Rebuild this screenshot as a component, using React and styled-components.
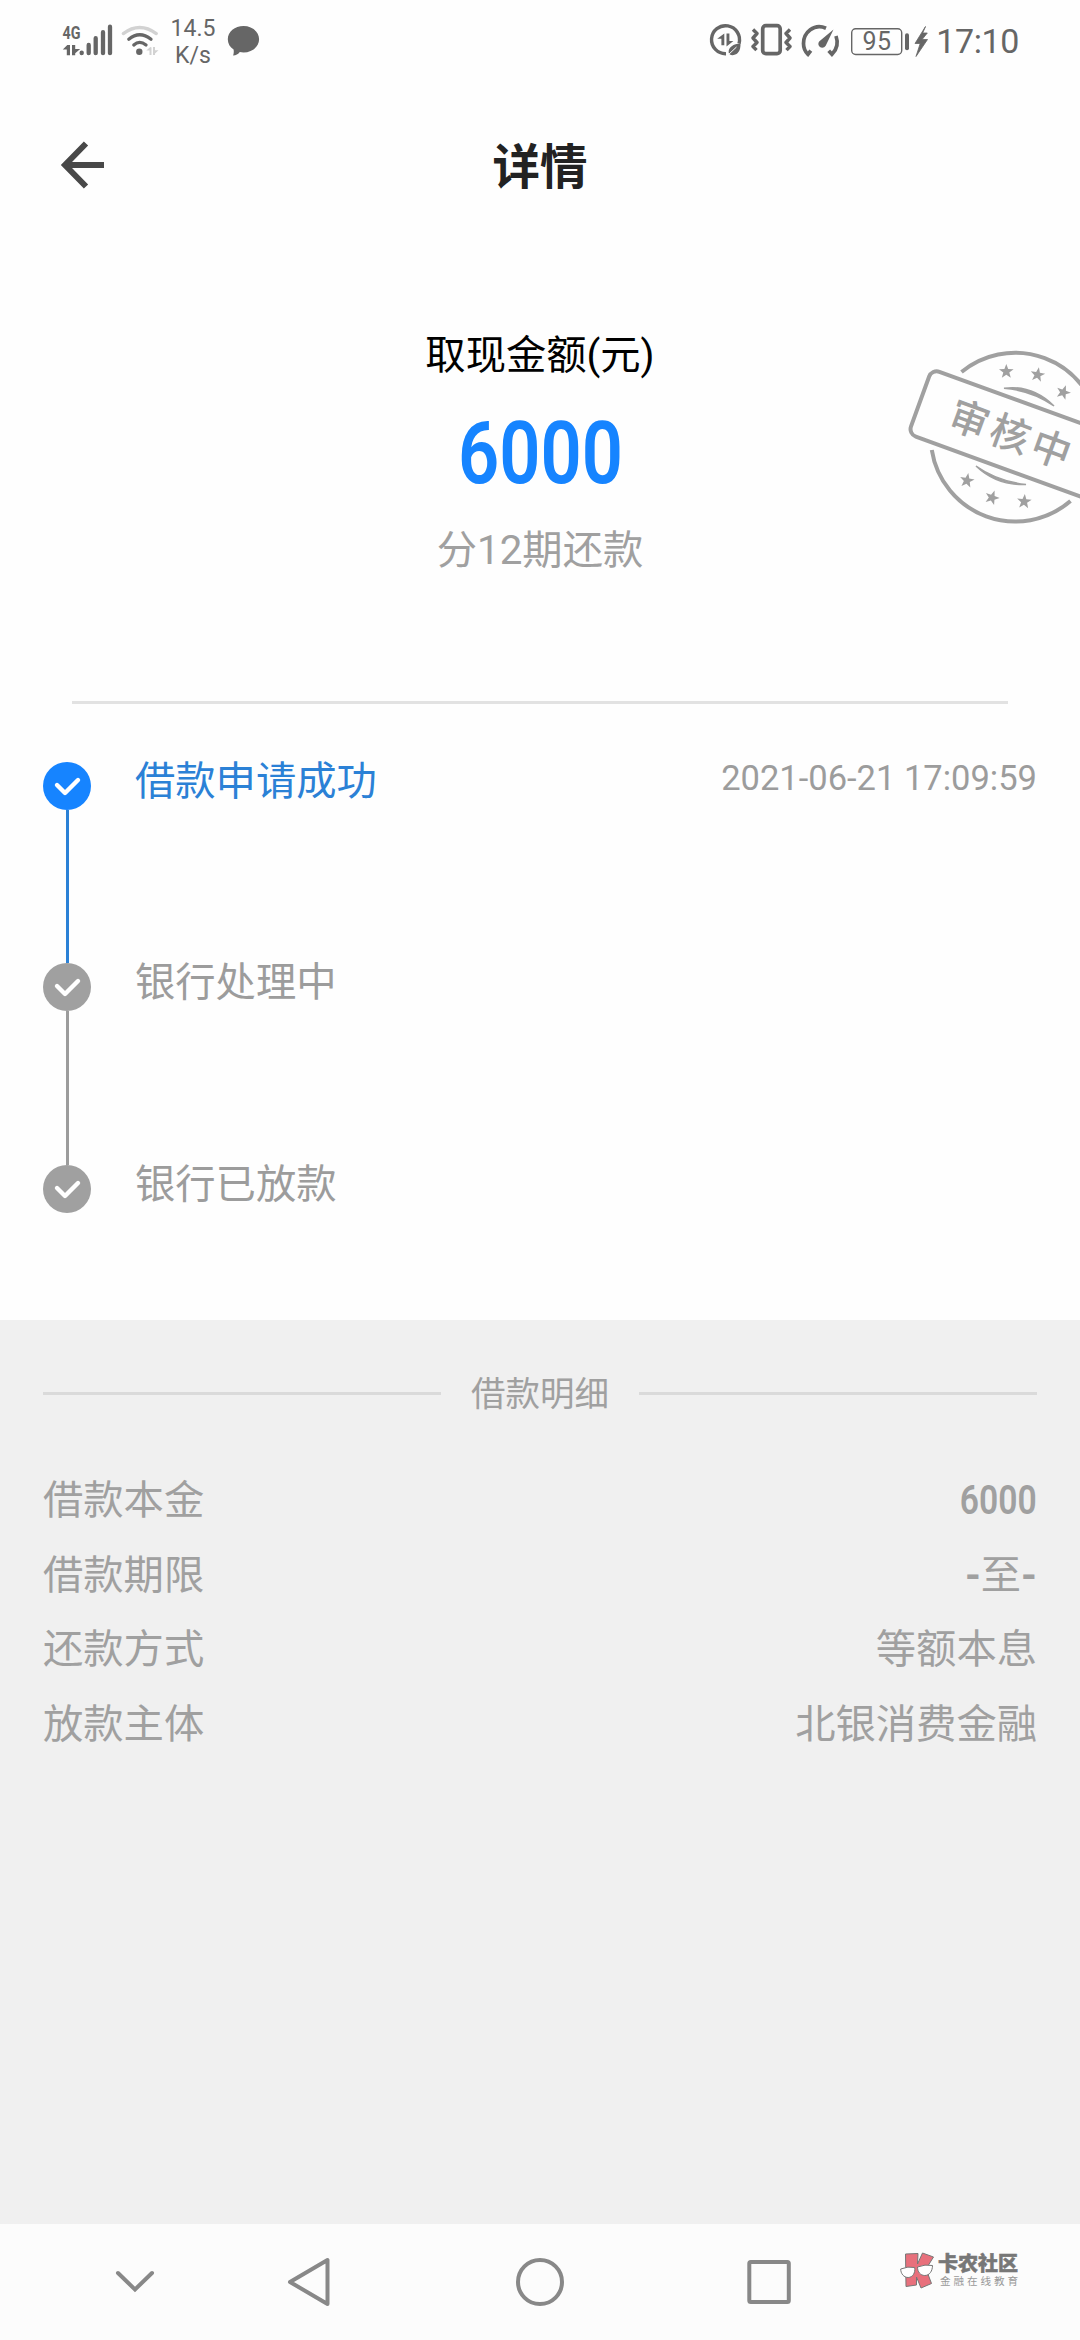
import React from 'react';
import styled, { createGlobalStyle } from 'styled-components';

const GlobalStyle = createGlobalStyle`
	* {
		box-sizing: border-box;
	}

	body {
		margin: 0;
		background: #fefefe;
		font-family: Roboto, 'Noto Sans CJK SC', sans-serif;
	}
`;

const Page = styled.div`
	display: flex;
	flex-direction: column;
	width: 1080px;
	height: 2340px;
	overflow: hidden;
	background: #fefefe;
`;

const StatusBar = styled.div`
	display: flex;
	justify-content: space-between;
	height: 80px;
	padding: 0 61px 0 60px;
	color: #666;
`;

const StatusGroup = styled.div`
	display: flex;
	align-items: flex-start;
`;

const NetSpeed = styled.div`
	width: 50px;
	margin-right: 9px;
	padding-top: 16px;
	font-size: 23px;
	line-height: 26.5px;
	text-align: center;
`;

const Clock = styled.div`
	padding-top: 21px;
	font-size: 34px;
	line-height: 40px;
	letter-spacing: -0.4px;
`;

const Header = styled.header`
	display: grid;
	grid-template-columns: 160px 1fr 160px;
	align-items: center;
	height: 170px;
`;

const BackButton = styled.button`
	display: flex;
	padding: 0 0 0 56px;
	border: 0;
	background: none;
`;

const Title = styled.h1`
	margin: 0;
	padding-top: 6px;
	color: #222;
	font-size: 47.5px;
	line-height: 60px;
	font-weight: 700;
	text-align: center;
`;

const Summary = styled.section`
	position: relative;
	display: flex;
	flex-direction: column;
	align-items: center;
	height: 451px;
	padding-top: 76px;
`;

const AmountLabel = styled.div`
	color: #000;
	font-size: 40.3px;
	line-height: 60px;
`;

const Amount = styled.div`
	margin-top: 15px;
	color: #1684ff;
	font-size: 87px;
	font-weight: 600;
	line-height: 104px;
	transform: scaleX(0.83);
`;

const Periods = styled.div`
	margin-top: 16px;
	color: #a0a0a0;
	font-size: 40.3px;
	line-height: 60px;
`;

const Stamp = styled.svg`
	position: absolute;
	top: 90px;
	right: 0;
`;

const Rule = styled.hr`
	width: 936px;
	height: 3px;
	margin: 0 auto;
	border: 0;
	background: #e2e2e2;
`;

const Timeline = styled.ul`
	height: 616px;
	margin: 0;
	padding: 58px 43px 0;
	list-style: none;
`;

const Step = styled.li`
	display: flex;
	height: 201.3px;
	color: ${(props) => (props.$active ? '#2b81d6' : '#9c9c9c')};
`;

const Rail = styled.div`
	display: flex;
	flex-direction: column;
	align-items: center;
	width: 48px;
	margin-right: 44px;

	svg {
		flex: none;
	}
`;

const RailLine = styled.div`
	width: 3px;
	flex: 1;
	background: currentColor;
`;

const StepName = styled.div`
	flex: 1;
	margin-top: -10px;
	font-size: 40.3px;
	line-height: 60px;
`;

const StepTime = styled.div`
	margin-top: -4px;
	color: #9c9c9c;
	font-size: 34.5px;
	line-height: 40px;
`;

const Details = styled.section`
	flex: 1;
	padding: 48px 43px 0;
	background: #f0f0f0;
	color: #a0a0a0;
`;

const DetailsTitle = styled.div`
	display: flex;
	align-items: center;
	gap: 30px;
	height: 50px;
	font-size: 34.5px;
	line-height: 50px;

	&::before,
	&::after {
		content: '';
		flex: 1;
		height: 3px;
		background: #dadada;
	}
`;

const DetailsName = styled.span`
	padding-top: 2px;
`;

const DetailList = styled.div`
	padding-top: 46px;
`;

const DetailRow = styled.div`
	display: flex;
	justify-content: space-between;
	height: 74.5px;
	font-size: 40.3px;
	line-height: 74.5px;
`;

const Din = styled.span`
	display: inline-block;
	font-size: 41px;
	font-weight: 600;
	line-height: 73px;
	transform: scaleX(0.82);
	transform-origin: right center;
`;

const NavBar = styled.nav`
	display: flex;
	align-items: flex-start;
	height: 116px;
	padding: 28px 0 0 105px;
	background: #fcfcfc;
`;

const NavButton = styled.button`
	width: 60px;
	height: 60px;
	margin-right: ${(props) => props.$gap}px;
	padding: 0;
	border: 0;
	background: none;

	svg {
		display: block;
	}
`;

const Brand = styled.div`
	display: flex;
	gap: 4px;
`;

const BrandName = styled.div`
	padding-top: 1px;
	color: #777;
	font-size: 20px;
	font-weight: 900;
	line-height: 22px;
	-webkit-text-stroke: 0.5px #777;
`;

const BrandTagline = styled.div`
	padding-left: 2px;
	color: #999;
	font-size: 10.6px;
	line-height: 13px;
	letter-spacing: 2.9px;
	white-space: nowrap;
`;

// network, signal bars and wifi
const SignalIcons = () => (
    <svg width="108" height="80" viewBox="60 0 108 80" fill="#666">
        <text x="62.5" y="38.500" fontSize="17.5" fontWeight="700" textLength="18" lengthAdjust="spacingAndGlyphs">4G</text>
        <path d="M70 45v10.3h-3.2v-5.8H62.800l4.500-4.500zM72 45v10.3h3.200v-2l5-4.300h-5v-4z" />
        <g stroke="#666" strokeWidth="4.300" strokeLinecap="round">
            <path d="M81.700 52.600v.6M88.700 45v8.200M95.700 38.200v15M103 32.200v21M110 26.700v26.500" />
        </g>
        <circle cx="139.300" cy="51.700" r="3.200" />
        <g fill="none" strokeWidth="3.300" strokeLinecap="round">
            <path d="M123.300 33.600Q139.600 21.400 156.300 33.600" stroke="#d2d2d2" />
            <path d="M128.800 39.200Q139.600 30.200 151 39.200" stroke="#666" />
            <path d="M133.800 45Q139.500 39.800 146 45" stroke="#666" />
        </g>
        <path d="M151.500 47.500v7.500h-2v-4.500h-3.200l4-3.500zM153 47v8h2v-1.500l3.500-3.200H155v-3.300z" fill="#d2d2d2" />
    </svg>
);

const ChatIcon = () => (
    <svg width="34" height="80" viewBox="227 0 34 80" fill="#666">
        <path d="M243.500 26c8.700 0 15.600 5.900 15.600 13.200s-6.900 13.200-15.600 13.200c-1.300 0-2.500-.1-3.700-.4-1.600 2.200-4.100 3.700-6.700 3.600.6-1.400.9-3.600.5-6-3.600-2.400-5.800-6.100-5.800-10.400 0-7.300 7-13.200 15.700-13.200z" />
    </svg>
);

const SystemIcons = () => (
    <svg width="230" height="80" viewBox="705 0 230 80" fill="none" stroke="#666">
        <path d="M738 43.500A14 14 0 1 0 725 53.700" strokeWidth="3.400" />
        <path d="M723.300 33.500v11.800h-2.900v-6.600h-4.200zM725.500 33.500h2.900v7.600h4l-6.900 5.500z" fill="#666" stroke="none" />
        <path d="M739.500 43.200c-7 .8-12.500 3.800-11.800 9.600.8 3.400 6.300 2.800 9 .2 2.400-2.400 2.900-6 2.800-9.800z" fill="#666" stroke="none" />
        <path d="M726.500 55.500l9-8.500" stroke="#fefefe" strokeWidth="1" />

        <rect x="761.700" y="25.700" width="17.500" height="28" rx="3.200" strokeWidth="3.700" />
        <path d="M752 29.500l4 4-4 4.500 4 4.500-4 4 3.500 3.700M789 29.500l-4 4 4 4.500-4 4.500 4 4-3.500 3.700" strokeWidth="3.400" strokeLinejoin="round" />

        <g strokeWidth="3.700">
            <path d="M825 28.200C813 23 802.500 32.500 802.500 43.500c0 4 1.500 8 4.500 10.800l2.800-3.600M835 36c2.300 6.500.8 13.500-4 18.300l-3.300-3.600" />
        </g>
        <path d="M832.500 29.500l-7.800 16.300c-1.800 3-6.300 2.300-7.200-.7-.5-1.800.3-3.300 1.500-4.300z" fill="#666" stroke="none" />

        <rect x="850.700" y="28.700" width="50" height="25.800" rx="4" strokeWidth="1.400" />
        <path d="M906 35.300v12.900" strokeWidth="4" strokeLinecap="round" />
        <text x="861.500" y="50" fill="#666" stroke="none" fontSize="25" letterSpacing="0.5">95</text>
        <path d="M924.500 26.500l-10.500 17h5.200l-4.200 13 11.500-17h-5.400l5.200-6.500h-4.600z" fill="#666" stroke="#666" strokeWidth="0.800" />
    </svg>
);

const STARS = [
    [1006.300, 371.500, 0],
    [1037.600, 374.700, 10],
    [1063.300, 392.300, 20],
    [967, 480.500, 10],
    [992, 497.600, 20],
    [1024.200, 501.500, 5]
];

const PendingStamp = () => (
    <Stamp width="180" height="200" viewBox="900 340 180 200" fill="none" stroke="#a0a0a0" strokeWidth="4">
        <path d="M961.500 372A84.500 84.500 0 0 1 1098.500 423M931.800 450A84.500 84.500 0 0 0 1070.500 501" />
        <rect x="914" y="401.500" width="202" height="69" rx="8" transform="rotate(20 1015 436)" />
        <path d="M1004 388.300Q1032 384.500 1054 406Q1032 390.500 1004 388.300zM976 466Q997 486 1026 484.500Q997 481 976 466z" strokeWidth="1.500" fill="#a0a0a0" />
        {STARS.map(([x, y, angle]) => (
            <path
                key={x}
                d="M0-7.600L1.900-2.400 7.300-2.300 3 1.100 4.500 6.300 0 3.200-4.500 6.300-3 1.100-7.300-2.300-1.900-2.400z"
                transform={`translate(${x} ${y}) rotate(${angle})`}
                fill="#a0a0a0"
                stroke="none"
            />
        ))}
        <text
            transform="translate(1010.500 433.500) rotate(20)"
            x="2"
            y="15"
            fill="#a0a0a0"
            stroke="none"
            fontSize="39.5"
            fontWeight="500"
            letterSpacing="4"
            textAnchor="middle"
        >
            审核中
        </text>
    </Stamp>
);

const StepMark = ({ active }) => (
    <svg width="48" height="48" viewBox="0 0 48 48">
        <circle cx="24" cy="24" r="24" fill={active ? '#1684ff' : '#a0a0a0'} />
        <path d="M14 23l8 8L35 18" fill="none" stroke="#fff" strokeWidth="4.400" strokeLinecap="round" strokeLinejoin="round" />
    </svg>
);

const BrandMark = () => (
    <svg width="35" height="38" viewBox="899 2252 35 38" stroke="#777" strokeWidth="1">
        <path d="M905.500 2254l12.500-.5-.5 10.500 5-11 11 4-7.500 12 5.500 14.500-10.500 4.500-4.500-11v8l-10.500 1.500z" fill="#e8707c" />
        <path d="M900.700 2269q7.300-3 14-1.500c.8 5.500-2 9.800-6.500 10-4.500 0-7.500-4-7.500-8.500zM917.500 2267q7.500-3 15-1.500c0 5.500-3 10-7.700 10-4.300 0-7.300-3.500-7.300-8.500z" fill="#fff" />
    </svg>
);

const steps = [
    { name: '借款申请成功', time: '2021-06-21 17:09:59', active: true },
    { name: '银行处理中' },
    { name: '银行已放款' }
];

const details = [
    { label: '借款本金', value: <Din>6000</Din> },
    { label: '借款期限', value: <span><b>-</b>至<b>-</b></span> },
    { label: '还款方式', value: '等额本息' },
    { label: '放款主体', value: '北银消费金融' }
];

const App = () => {
    return (
        <Page>
            <GlobalStyle />
            <StatusBar>
                <StatusGroup>
                    <SignalIcons />
                    <NetSpeed>14.5<br />K/s</NetSpeed>
                    <ChatIcon />
                </StatusGroup>
                <StatusGroup>
                    <SystemIcons />
                    <Clock>17:10</Clock>
                </StatusGroup>
            </StatusBar>

            <Header>
                <BackButton>
                    <svg width="52" height="52" viewBox="56 139 52 52" fill="none" stroke="#484848" strokeWidth="6">
                        <path d="M104 165H65M86 143.500L65 165l21 21.500" />
                    </svg>
                </BackButton>
                <Title>详情</Title>
            </Header>

            <Summary>
                <AmountLabel>取现金额(元)</AmountLabel>
                <Amount>6000</Amount>
                <Periods>分12期还款</Periods>
                <PendingStamp />
            </Summary>
            <Rule />

            <Timeline>
                {steps.map((step, index) => (
                    <Step key={step.name} $active={step.active}>
                        <Rail>
                            <StepMark active={step.active} />
                            {index < steps.length - 1 && <RailLine />}
                        </Rail>
                        <StepName>{step.name}</StepName>
                        {step.time && <StepTime>{step.time}</StepTime>}
                    </Step>
                ))}
            </Timeline>

            <Details>
                <DetailsTitle>
                    <DetailsName>借款明细</DetailsName>
                </DetailsTitle>
                <DetailList>
                    {details.map((item) => (
                        <DetailRow key={item.label}>
                            <span>{item.label}</span>
                            <span>{item.value}</span>
                        </DetailRow>
                    ))}
                </DetailList>
            </Details>

            <NavBar>
                <NavButton $gap={113}>
                    <svg width="60" height="60" viewBox="105 2252 60 60" fill="none" stroke="#888" strokeWidth="4" strokeLinecap="round">
                        <path d="M118 2273l17 16.500 17-16.500" />
                    </svg>
                </NavButton>
                <NavButton $gap={172}>
                    <svg width="60" height="60" viewBox="278 2252 60 60" fill="none" stroke="#888" strokeWidth="4" strokeLinejoin="round">
                        <path d="M327.500 2260v44L290 2282z" />
                    </svg>
                </NavButton>
                <NavButton $gap={169}>
                    <svg width="60" height="60" viewBox="510 2252 60 60" fill="none" stroke="#888" strokeWidth="4">
                        <circle cx="540" cy="2282" r="22" />
                    </svg>
                </NavButton>
                <NavButton $gap={100}>
                    <svg width="60" height="60" viewBox="739 2252 60 60" fill="none" stroke="#888" strokeWidth="4">
                        <rect x="749.300" y="2262" width="39.500" height="40" rx="1.500" />
                    </svg>
                </NavButton>
                <Brand>
                    <BrandMark />
                    <div>
                        <BrandName>卡农社区</BrandName>
                        <BrandTagline>金融在线教育</BrandTagline>
                    </div>
                </Brand>
            </NavBar>
        </Page>
    );
};

export default App;
